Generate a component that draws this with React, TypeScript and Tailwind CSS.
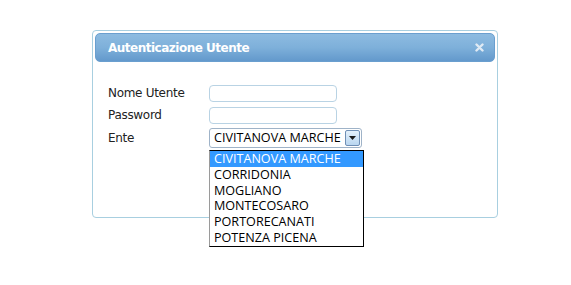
import React from 'react';

const enti = [
  'CIVITANOVA MARCHE',
  'CORRIDONIA',
  'MOGLIANO',
  'MONTECOSARO',
  'PORTORECANATI',
  'POTENZA PICENA',
];

// Login dialog field row
const FieldRow = ({ label, children }: { label: string; children: React.ReactNode }) => (
  <div className="flex items-center">
    <div className="w-[101px] text-[12px] tracking-[-0.3px] text-[#222]">{label}</div>
    {children}
  </div>
);

export default function App() {
  return (
    <div className="w-[571px] h-[285px] bg-white relative" style={{ fontFamily: '"DejaVu Sans", Verdana, sans-serif' }}>
      <div className="absolute left-[92px] top-[30px] w-[406px] h-[188px] border border-[#a8cfe0] rounded-[4px] bg-white p-[2px]">
        <div className="h-[29px] rounded-[5px] border border-[#6a9fcf] bg-gradient-to-b from-[#8dbbe1] via-[#7eb0da] to-[#6399cc] flex items-center justify-between pl-[12px] pr-[10px]">
          <span className="text-white font-bold text-[12px] tracking-[-0.5px] pt-[1px]">Autenticazione Utente</span>
          <svg width="9" height="9" viewBox="0 0 9 9">
            <path d="M1.5 1.5 L7.5 7.5 M7.5 1.5 L1.5 7.5" stroke="#dfeaf4" strokeWidth="2.4" strokeLinecap="round" />
          </svg>
        </div>
        <div className="pl-[13px] pt-[22px] flex flex-col gap-[4px]">
          <FieldRow label="Nome Utente">
            <div className="w-[128px] h-[17px] border border-[#b9d3e4] rounded-[4px] bg-white" />
          </FieldRow>
          <FieldRow label="Password">
            <div className="w-[128px] h-[17px] border border-[#b9d3e4] rounded-[4px] bg-white" />
          </FieldRow>
          <FieldRow label="Ente">
            <div className="relative">
              <div className="w-[153px] h-[20px] border border-[#9fb3c8] rounded-[3px] bg-white flex items-center justify-between pl-[4px] pr-[1px]" style={{ fontFamily: '"Open Sans", "Noto Sans", sans-serif' }}>
                <span className="text-[12.6px] text-black">CIVITANOVA MARCHE</span>
                <div className="w-[15px] h-[16px] border border-[#6f8fb5] rounded-[2px] bg-gradient-to-b from-[#e4f1fb] to-[#b9d6f0] flex items-center justify-center">
                  <svg width="7" height="4" viewBox="0 0 7 4"><path d="M0 0 H7 L3.5 4 Z" fill="#1a1a1a" /></svg>
                </div>
              </div>
              <div className="absolute left-0 top-[22px] w-[155px] border border-black border-l-[#9a9a9a] bg-white z-10" style={{ fontFamily: '"Open Sans", "Noto Sans", sans-serif' }}>
                {enti.map((e, i) => (
                  <div key={e} className={`h-[15.8px] leading-[15.8px] pl-[4px] text-[12.6px] ${i === 0 ? 'bg-[#3399ff] text-white' : 'text-black'}`}>
                    {e}
                  </div>
                ))}
              </div>
            </div>
          </FieldRow>
        </div>
      </div>
    </div>
  );
}
